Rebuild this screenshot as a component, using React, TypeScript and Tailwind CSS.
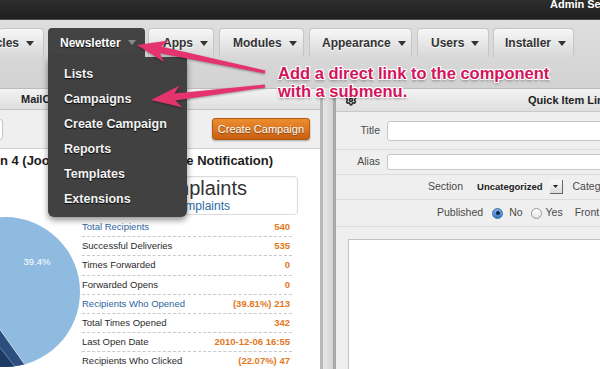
import { Settings } from "lucide-react";

const stats = [
  { label: "Total Recipients", value: "540", link: true },
  { label: "Successful Deliveries", value: "535" },
  { label: "Times Forwarded", value: "0" },
  { label: "Forwarded Opens", value: "0" },
  { label: "Recipients Who Opened", value: "(39.81%) 213", link: true },
  { label: "Total Times Opened", value: "342" },
  { label: "Last Open Date", value: "2010-12-06 16:55" },
  { label: "Recipients Who Clicked", value: "(22.07%) 47" },
];

const submenu = ["Lists", "Campaigns", "Create Campaign", "Reports", "Templates", "Extensions"];

function Caret({ color = "#333" }: { color?: string }) {
  return (
    <svg width="8" height="5" viewBox="0 0 8 5" className="shrink-0">
      <path d="M0 0h8L4 5z" fill={color} />
    </svg>
  );
}

function Tab({ label, className }: { label: string; className: string }) {
  return (
    <div
      className={`h-[29px] shrink-0 overflow-hidden rounded-t-[4px] border border-b-0 border-[#c6c6c6] bg-linear-to-b from-[#f7f7f7] to-[#d8d8d8] flex items-center gap-[7px] text-[12px] font-bold text-[#333] [text-shadow:0_1px_0_#fff] ${className}`}
    >
      <span className="whitespace-nowrap">{label}</span>
      <Caret />
    </div>
  );
}

function NewsletterTab() {
  return (
    <div className="relative ml-[4px] w-[97px] shrink-0">
      <div className="h-[29px] rounded-t-[4px] bg-[#434343] flex items-center pl-[12px] gap-[7px] text-[12px] font-bold text-white [text-shadow:0_1px_1px_rgba(0,0,0,0.8)]">
        <span>Newsletter</span>
        <Caret color="#8a8a8a" />
      </div>
      <div className="absolute left-0 top-full z-20 w-[139px] rounded-b-[6px] bg-[#414141] pt-[5px] pb-[5px] pl-[16px] shadow-[0_3px_6px_rgba(0,0,0,0.45)]">
        {submenu.map((item) => (
          <div
            key={item}
            className="h-[25px] leading-[25px] text-[12.5px] font-bold text-[#f4f4f4] whitespace-nowrap [text-shadow:0_1px_1px_rgba(0,0,0,0.9)]"
          >
            {item}
          </div>
        ))}
      </div>
    </div>
  );
}

function Pie() {
  return (
    <svg width="82" height="151" viewBox="0 0 82 151" className="shrink-0 overflow-visible">
      <defs>
        <clipPath id="pieclip">
          <circle cx="5" cy="74" r="75" />
        </clipPath>
      </defs>
      <circle cx="5" cy="74" r="75" fill="#8fbbe1" />
      <g clipPath="url(#pieclip)">
        <polygon points="-6,103 28,151 -6,151" fill="#2c4f7d" stroke="#c8d8e8" strokeWidth="1" />
        <polygon points="-6,122 17,151 -6,151" fill="#1d3a62" stroke="#6a87a8" strokeWidth="1" />
      </g>
      <text x="37" y="47" textAnchor="middle" fontSize="9.5" fill="#fff" fontFamily="Liberation Sans, Arial, sans-serif">
        39.4%
      </text>
    </svg>
  );
}

function Radio({ checked }: { checked?: boolean }) {
  return checked ? (
    <span className="block w-[11px] h-[11px] rounded-full bg-linear-to-b from-[#7fb4ea] to-[#2f78c8] border border-[#3a6ea5] flex items-center justify-center shrink-0">
      <span className="block w-[4px] h-[4px] rounded-full bg-[#10243d]" />
    </span>
  ) : (
    <span className="block w-[11px] h-[11px] rounded-full bg-linear-to-b from-[#ffffff] to-[#e4e4e4] border border-[#9a9a9a] shrink-0" />
  );
}

function Arrows() {
  return (
    <svg
      width="600"
      height="369"
      viewBox="0 0 600 369"
      className="absolute left-0 top-0 z-30 pointer-events-none [filter:drop-shadow(0_1px_1px_rgba(0,0,0,0.35))]"
    >
      <polygon
        points="137,45 168.6,40.4 161.2,46.5 265.3,70.5 264.7,73.5 159.8,53.3 164,62"
        fill="#e5336e"
      />
      <polygon
        points="151,100 179.5,85.4 174.4,93.6 264.8,84.5 265.2,87.5 175.2,100.6 182.1,107.2"
        fill="#e5336e"
      />
    </svg>
  );
}

export default function App() {
  return (
    <div className="relative w-[600px] h-[369px] overflow-hidden bg-[#d6d6d6] font-['Liberation_Sans',Arial,sans-serif]">
      {/* top bar */}
      <div className="h-[20px] bg-linear-to-b from-[#2e2e2e] to-[#1f1f1f] border-b border-[#4a4a4a] pl-[550px] overflow-hidden">
        <div className="-mt-[2px] text-[11px] leading-[12px] font-bold text-white whitespace-nowrap">Admin Settings</div>
      </div>

      {/* main menu */}
      <div className="h-[68px] bg-linear-to-b from-[#dedede] to-[#d2d2d2] pt-[8px]">
        <div className="flex">
          <Tab label="Articles" className="w-[45px] justify-end pr-[9px] -ml-[1px] border-l-0" />
          <NewsletterTab />
          <Tab label="Apps" className="ml-[3px] w-[66px] pl-[14px]" />
          <Tab label="Modules" className="ml-[5px] w-[85px] pl-[13px]" />
          <Tab label="Appearance" className="ml-[5px] w-[103px] pl-[12px]" />
          <Tab label="Users" className="ml-[5px] w-[72px] pl-[13px]" />
          <Tab label="Installer" className="ml-[4px] w-[81px] pl-[11px]" />
        </div>
      </div>

      {/* panels */}
      <div className="flex h-[281px]">
        {/* left panel */}
        <div className="w-[320px] shrink-0 flex flex-col bg-white">
          <div className="h-[22px] shrink-0 border-t border-[#bcbcbc] border-b border-b-[#c4c4c4] bg-linear-to-b from-[#f3f3f3] to-[#dedede] pl-[21px] flex items-center text-[11px] font-bold text-[#222]">
            MailChimp Campaign Overview
          </div>
          <div className="h-[39px] shrink-0 bg-[#efefef] border-b border-[#cfcfcf] flex items-center justify-between pr-[10px]">
            <div className="w-[60px] h-[21px] -ml-[57px] bg-white border border-[#c4c4c4] rounded-[3px]" />
            <button className="h-[22px] px-[5px] rounded-[3px] border border-[#b35a10] bg-linear-to-b from-[#ee8d2f] to-[#c9600f] text-[11px] text-white [text-shadow:0_1px_1px_rgba(0,0,0,0.45)] shadow-[0_1px_2px_rgba(0,0,0,0.3)]">
              Create Campaign
            </button>
          </div>
          <div className="flex-1 flex flex-col">
            <div className="h-[24px] flex items-center justify-end pr-[47px] overflow-hidden whitespace-nowrap text-[13px] font-bold text-[#1c1c1c]">
              Campaign 4 (Joomla! 1.6.0 Beta Release Notification)
            </div>
            <div className="mt-[3px] flex justify-end pr-[22px]">
              <div className="w-[160px] h-[39px] border border-[#dcdcdc] rounded-[4px] pl-[8px] pt-[1px] shadow-[inset_0_1px_2px_rgba(0,0,0,0.05)]">
                <div className="text-[20px] leading-[21px] text-[#333]">Complaints</div>
                <div className="ml-[13px] text-[12px] leading-[14px] text-[#2c6aa3]">0 Complaints</div>
              </div>
            </div>
            <div className="mt-[3px] flex">
              <Pie />
              <div className="w-[210px]">
                {stats.map((s) => (
                  <div
                    key={s.label}
                    className="h-[19.2px] flex items-center justify-between border-b border-dashed border-[#c9c9c9] text-[9.5px] whitespace-nowrap"
                  >
                    <span className={s.link ? "text-[#2f64a0]" : "text-[#2a2a2a]"}>{s.label}</span>
                    <span className="pr-[2px] font-bold text-[#e2781d]">{s.value}</span>
                  </div>
                ))}
              </div>
            </div>
          </div>
        </div>

        {/* divider */}
        <div className="w-[16px] shrink-0 flex">
          <div className="w-[3px] bg-[#b8b8b8]" />
          <div className="flex-1 bg-linear-to-r from-[#e6e6e6] to-[#d4d4d4]" />
          <div className="w-[3px] bg-[#a8a8a8]" />
        </div>

        {/* right panel */}
        <div className="flex-1 flex flex-col bg-[#efefef] text-[10.5px] text-[#4a4a4a]">
          <div className="h-[24px] shrink-0 border-t border-[#bcbcbc] border-b border-b-[#c8c8c8] bg-linear-to-b from-[#f3f3f3] to-[#dedede] flex items-center pl-[9px] whitespace-nowrap">
            <Settings size={12} strokeWidth={3} color="#2a2a2a" className="shrink-0" />
            <span className="ml-[171px] text-[11px] font-bold text-[#222]">Quick Item Link</span>
          </div>
          <div className="h-[38px] shrink-0 border-b border-[#dcdcdc] flex items-center">
            <span className="w-[44px] text-right">Title</span>
            <div className="ml-[7px] flex-1 -mr-[10px] h-[20px] bg-white border border-[#c6c6c6] rounded-[3px]" />
          </div>
          <div className="h-[25px] shrink-0 border-b border-[#dcdcdc] flex items-center">
            <span className="w-[44px] text-right">Alias</span>
            <div className="ml-[7px] flex-1 -mr-[10px] h-[16px] bg-white border border-[#c6c6c6] rounded-[3px]" />
          </div>
          <div className="h-[25px] shrink-0 border-b border-[#dcdcdc] flex items-center pl-[92px] whitespace-nowrap">
            <span>Section</span>
            <span className="ml-[14px] text-[9.5px] font-bold text-[#222]">Uncategorized</span>
            <span className="ml-[7px] w-[13px] h-[14px] bg-linear-to-b from-[#fafafa] to-[#dcdcdc] border-r border-b border-[#666] flex items-center justify-center">
              <svg width="5" height="3" viewBox="0 0 5 3">
                <path d="M0 0h5L2.5 3z" fill="#222" />
              </svg>
            </span>
            <span className="ml-[10px]">Category</span>
          </div>
          <div className="h-[27px] shrink-0 border-b border-[#dcdcdc] flex items-center pl-[101px] whitespace-nowrap">
            <span>Published</span>
            <span className="ml-[9px]">
              <Radio checked />
            </span>
            <span className="ml-[6px]">No</span>
            <span className="ml-[8px]">
              <Radio />
            </span>
            <span className="ml-[4px]">Yes</span>
            <span className="ml-[12px]">Front Page</span>
          </div>
          <div className="flex-1 pl-[12px] pt-[12px]">
            <div className="h-full bg-white border-l border-t border-[#c4c4c4]" />
          </div>
        </div>
      </div>

      <Arrows />

      {/* annotation */}
      <div className="absolute left-[278px] top-[64px] z-30 text-[16.5px] leading-[18px] font-bold text-[#d3145c] whitespace-nowrap [text-shadow:1px_1px_0_#fff,-1px_-1px_0_#fff,1px_-1px_0_#fff,-1px_1px_0_#fff,0_1px_0_#fff,1px_0_0_#fff,0_2px_3px_rgba(0,0,0,0.45)]">
        <div>Add a direct link to the component</div>
        <div>with a submenu.</div>
      </div>
    </div>
  );
}
